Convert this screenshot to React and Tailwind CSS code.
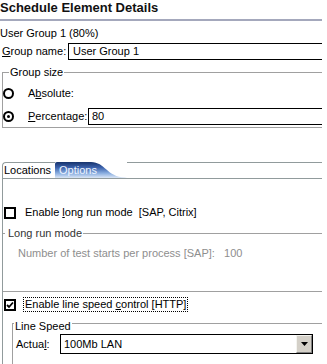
import React from "react";

function Radio({ checked }) {
  return (
    <div className="w-[11px] h-[11px] rounded-full border-2 border-black flex items-center justify-center shrink-0 bg-white">
      {checked && <div className="w-[3px] h-[3px] rounded-full bg-black" />}
    </div>
  );
}

function Checkbox({ checked }) {
  return (
    <div className="w-[12px] h-[12px] border-2 border-black bg-white shrink-0 flex items-center justify-center">
      {checked && (
        <svg width="8" height="8" viewBox="0 0 8 8">
          <path d="M1 4 L3 6 L7 1.5" stroke="black" strokeWidth="1.8" fill="none" />
        </svg>
      )}
    </div>
  );
}

export default function App() {
  return (
    <div className="w-[327px] h-[364px] bg-white overflow-hidden font-['Liberation_Sans',Arial,sans-serif] text-[11px] leading-[13px] text-black">
      <div className="w-[322px] h-[364px] overflow-hidden">
        <div className="w-[340px]">
          {/* Title */}
          <div className="h-[21px] border-b-2 border-[#a4a8bc] text-[13px] font-bold leading-[16px] text-[#111]">
            Schedule Element Details
          </div>

          <div className="mt-[6px]">User Group 1 (80%)</div>

          {/* Group name */}
          <div className="mt-[3px] flex items-center h-[17px] pl-[2px]">
            <div className="w-[66px] shrink-0">
              <span className="underline">G</span>roup name:
            </div>
            <div className="flex-1 h-[17px] border border-black pl-[4px] flex items-center">
              User Group 1
            </div>
          </div>

          {/* Group size */}
          <div className="mt-[12px] ml-[2px] relative border-t border-l border-b border-[#a0a0a0] pt-[12px] pb-[2px]">
            <span className="absolute -top-[7px] left-[6px] bg-white px-[1px]">Group size</span>
            <div className="flex items-center h-[16px]">
              <Radio />
              <span className="ml-[14px]">
                A<span className="underline">b</span>solute:
              </span>
            </div>
            <div className="mt-[7px] flex items-center h-[17px]">
              <Radio checked />
              <span className="ml-[14px] w-[60px] shrink-0">
                <span className="underline">P</span>ercentage:
              </span>
              <div className="flex-1 h-[17px] border border-black pl-[3px] flex items-center">80</div>
            </div>
          </div>

          {/* Tab folder */}
          <div className="mt-[34px] ml-[2px]">
            <div className="flex h-[17px] border-b border-[#919b9c]">
              <div className="w-[53px] h-[16px] border-t border-l border-[#919b9c] rounded-tl-[4px] pl-[1px] flex items-center shrink-0">
                Locations
              </div>
              <div className="relative w-[72px] h-[16px] shrink-0 pl-[4px] flex items-center text-[#eef4ff]">
                <svg className="absolute inset-0" width="72" height="16" viewBox="0 0 72 16">
                  <defs>
                    <linearGradient id="tabg" x1="0" y1="0" x2="0" y2="1">
                      <stop offset="0" stopColor="#16326c" />
                      <stop offset="0.35" stopColor="#3c62ac" />
                      <stop offset="0.7" stopColor="#8aaee0" />
                      <stop offset="1" stopColor="#dce7f6" />
                    </linearGradient>
                  </defs>
                  <path d="M0 16 L0 2 Q0 0 2 0 L36 0 C50 0 52 15 70 15.5 L72 16 Z" fill="url(#tabg)" />
                </svg>
                <span className="relative">Options</span>
              </div>
              <div className="flex-1 h-[16px] border-t border-[#919b9c]" />
            </div>

            <div className="border-l border-[#919b9c] h-[200px] pt-[27px]">
              <div className="flex items-center h-[13px] pl-[1px]">
                <Checkbox />
                <span className="ml-[9px] whitespace-pre">
                  Enable <span className="underline">l</span>ong run mode  [SAP, Citrix]
                </span>
              </div>

              <div className="mt-[14px] relative border-t border-b border-[#a0a0a0] pt-[13px] pb-[31px]">
                <span className="absolute -top-[7px] left-[2px] bg-white pl-[3px] pr-[1px] text-[#333]">Long run mode</span>
                <div className="pl-[15px] text-[#8e8e8e] whitespace-pre">Number of test starts per process [SAP]:   100</div>
              </div>

              <div className="mt-[5px] flex items-center h-[15px] pl-[1px]">
                <Checkbox checked />
                <span className="ml-[7px] h-[15px] border border-dotted border-black px-[1px] inline-block whitespace-pre leading-[13px]">
                  Enable line speed <span className="underline">c</span>ontrol [HTTP]
                </span>
              </div>

              <div className="mt-[11px] ml-[9px] relative border-t border-l border-[#a0a0a0] h-[60px] pt-[10px]">
                <span className="absolute -top-[4px] left-[1px] bg-white px-[1px]">Line Speed</span>
                <div className="flex items-center h-[20px] pl-[3px]">
                  <div className="w-[44px] shrink-0">
                    Actua<span className="underline">l</span>:
                  </div>
                  <div className="w-[253px] h-[20px] border border-black flex items-center shrink-0">
                    <div className="flex-1 pl-[3px]">100Mb LAN</div>
                    <div className="w-[16px] h-[18px] bg-[#d4d0c8] border border-t-[#f4f4f0] border-l-[#f4f4f0] border-b-[#808080] border-r-[#808080] flex items-center justify-center">
                      <svg width="7" height="4" viewBox="0 0 7 4">
                        <path d="M0 0 L7 0 L3.5 4 Z" fill="black" />
                      </svg>
                    </div>
                  </div>
                </div>
              </div>
            </div>
          </div>
        </div>
      </div>
    </div>
  );
}
